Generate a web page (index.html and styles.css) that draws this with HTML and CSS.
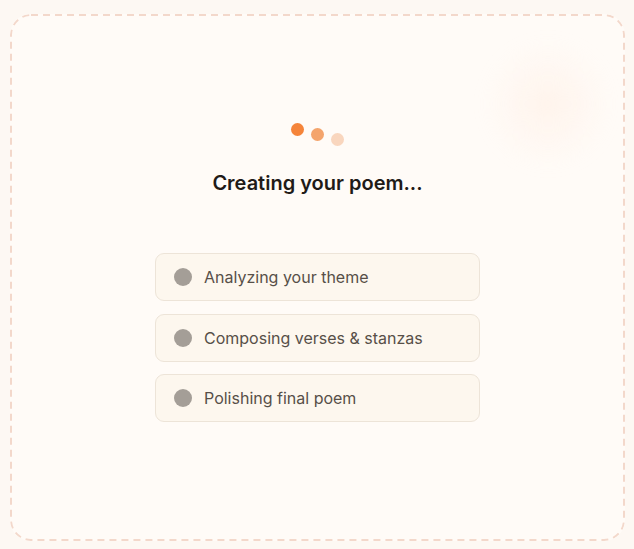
FILE: index.html
```html
<!DOCTYPE html>
<html>
<head>
<meta charset="utf-8">
<link rel="stylesheet" href="styles.css">
</head>
<body>
<div class="page">
  <div class="card">
    <svg class="frame" xmlns="http://www.w3.org/2000/svg"><rect class="frame-rect" x="1" y="1" rx="20" ry="20"/></svg>
    <div class="glow"></div>
    <div class="dots">
      <span class="dot d1"></span>
      <span class="dot d2"></span>
      <span class="dot d3"></span>
    </div>
    <h1 class="title">Creating your poem...</h1>
    <ul class="steps">
      <li class="step"><span class="bullet"></span>Analyzing your theme</li>
      <li class="step"><span class="bullet"></span>Composing verses &amp; stanzas</li>
      <li class="step"><span class="bullet"></span>Polishing final poem</li>
    </ul>
  </div>
</div>
</body>
</html>
```

FILE: styles.css
```css
html, body {
  margin: 0;
  padding: 0;
  background: #fdf8f3;
  font-family: Inter, "Noto Sans", sans-serif;
}
.page {
  padding: 14px 9px 8px 10px;
  height: 549px;
  box-sizing: border-box;
  display: flex;
}
.card {
  flex: 1;
  position: relative;
  border-radius: 21px;
  background: #fffbf7;
  display: flex;
  flex-direction: column;
  align-items: center;
  padding-top: 109px;
  box-sizing: border-box;
  overflow: hidden;
}
.frame {
  position: absolute;
  left: 0;
  top: 0;
  width: 100%;
  height: 100%;
  pointer-events: none;
}
.frame-rect {
  width: calc(100% - 2px);
  height: calc(100% - 2px);
  fill: none;
  stroke: #f3d8cb;
  stroke-width: 2;
  stroke-dasharray: 7 5;
}
.glow {
  position: absolute;
  right: 12px;
  top: 25px;
  width: 130px;
  height: 130px;
  background: radial-gradient(circle at 50% 50%, rgba(255, 230, 214, 0.35) 0%, rgba(255, 236, 224, 0.15) 45%, rgba(255, 240, 230, 0) 70%);
  filter: blur(8px);
}
.dots {
  display: flex;
  gap: 7px;
  height: 25px;
}
.dot {
  width: 13px;
  height: 13px;
  border-radius: 50%;
  display: block;
}
.d1 { background: #f5843a; }
.d2 { background: #f4a46c; margin-top: 5px; }
.d3 { background: #f9d6be; margin-top: 10px; }
.title {
  margin: 21px 0 0 0;
  font-size: 20px;
  font-weight: 600;
  color: #1f1b18;
  line-height: 28px;
}
.steps {
  list-style: none;
  margin: 56px 0 0 0;
  padding: 0;
  display: flex;
  flex-direction: column;
  gap: 12.5px;
  width: 325px;
}
.step {
  height: 48px;
  box-sizing: border-box;
  border: 1px solid #ede4d8;
  border-radius: 9px;
  background: #fdf7ee;
  display: flex;
  align-items: center;
  padding-left: 18px;
  font-size: 16px;
  color: #574f48;
}
.bullet {
  width: 18px;
  height: 18px;
  border-radius: 50%;
  background: #a49e97;
  margin-right: 12px;
}
```
